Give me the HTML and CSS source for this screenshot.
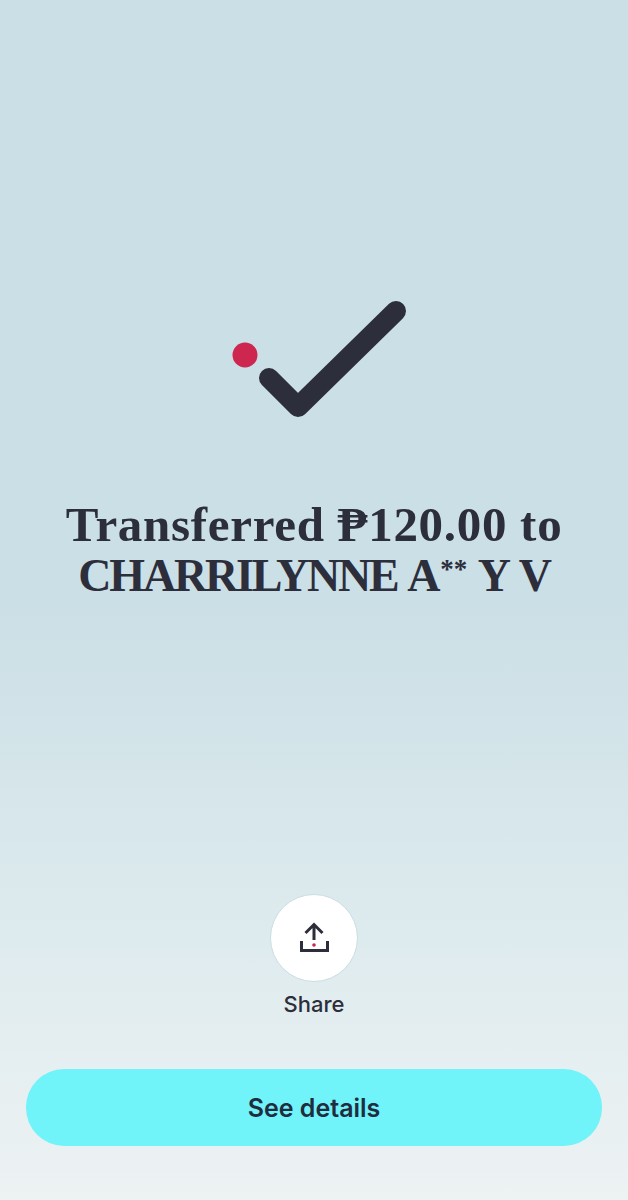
FILE: index.html
```html
<!DOCTYPE html>
<html lang="en">
<head>
    <meta charset="UTF-8">
    <meta name="viewport" content="width=device-width, initial-scale=1.0">
    <title>Transfer complete</title>
    <link rel="stylesheet" href="styles.css">
</head>
<body>
    <div class="screen">
        <div class="status">
            <svg class="check" width="180" height="124" viewBox="0 0 180 124">
                <circle cx="15" cy="59" r="12.5" fill="#cd2750"/>
                <path d="M39 82 L68 111 L166 15" fill="none" stroke="#2d2e3b" stroke-width="20" stroke-linecap="round" stroke-linejoin="round"/>
            </svg>
            <h1 class="title">
                <span class="line-amount">Transferred ₱120.00 to</span>
                <span class="line-name">CHARRILYNNE A<span class="stars">**</span> Y V</span>
            </h1>
        </div>

        <div class="actions">
            <div class="share">
                <div class="share-circle">
                    <svg width="32" height="32" viewBox="0 0 32 32">
                        <path d="M3.5 19 V28.5 H29.5 V19" fill="none" stroke="#2d2e3b" stroke-width="3"/>
                        <path d="M16 18 V3 M7.5 11 L16 2.5 L24.5 11" fill="none" stroke="#2d2e3b" stroke-width="3"/>
                        <circle cx="16" cy="23" r="1.8" fill="#cd2750"/>
                    </svg>
                </div>
                <span class="share-label">Share</span>
            </div>
            <button class="details">See details</button>
        </div>
    </div>
</body>
</html>
```

FILE: styles.css
```css
body {
    margin: 0;
    font-family: Inter, "Noto Sans", sans-serif;
    color: #2d2e3b;
}
.screen {
    height: 1200px;
    box-sizing: border-box;
    display: flex;
    flex-direction: column;
    justify-content: space-between;
    padding: 296px 26px 54px;
    background: linear-gradient(to bottom, #cbdfe6 0%, #cbdfe6 50%, #deebee 78%, #edf2f3 100%);
}
.status {
    display: flex;
    flex-direction: column;
    align-items: center;
}
.check {
    margin-left: 12px;
}
.title {
    margin: 79px 0 0;
    font-family: "Liberation Serif", serif;
    font-size: 49px;
    line-height: 51px;
    font-weight: 700;
    text-align: center;
    white-space: nowrap;
}
.line-amount {
    display: block;
    letter-spacing: 0.7px;
}
.line-name {
    display: block;
    font-size: 46px;
    letter-spacing: -2.2px;
    word-spacing: 3px;
}
.stars {
    font-size: 27px;
    letter-spacing: 0;
    vertical-align: 13px;
    line-height: 0;
    margin-left: 2px;
}
.actions {
    display: flex;
    flex-direction: column;
    align-items: center;
}
.share {
    display: flex;
    flex-direction: column;
    align-items: center;
}
.share-circle {
    width: 86px;
    height: 86px;
    border: 1.5px solid #c9dde4;
    border-radius: 50%;
    background-color: #fff;
    display: flex;
    align-items: center;
    justify-content: center;
}
.share-label {
    margin-top: 7px;
    font-size: 22px;
    line-height: 30px;
    font-weight: 500;
}
.details {
    width: 100%;
    height: 77px;
    margin-top: 50px;
    border: none;
    border-radius: 38px;
    background-color: #70f3f9;
    color: #1f2d3f;
    font-family: Inter, "Noto Sans", sans-serif;
    font-size: 25px;
    font-weight: 600;
}
```
